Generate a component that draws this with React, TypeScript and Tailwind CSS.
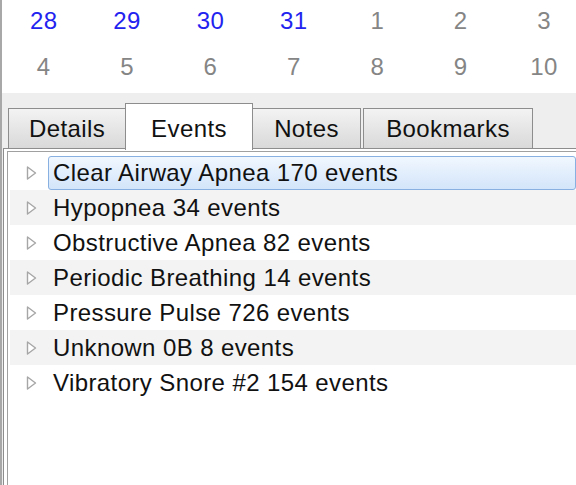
import React from "react";

const row1 = [
  { n: "28", blue: true },
  { n: "29", blue: true },
  { n: "30", blue: true },
  { n: "31", blue: true },
  { n: "1", blue: false },
  { n: "2", blue: false },
  { n: "3", blue: false },
];
const row2 = ["4", "5", "6", "7", "8", "9", "10"];

const events = [
  "Clear Airway Apnea 170 events",
  "Hypopnea 34 events",
  "Obstructive Apnea 82 events",
  "Periodic Breathing 14 events",
  "Pressure Pulse 726 events",
  "Unknown 0B 8 events",
  "Vibratory Snore #2 154 events",
];

function Tri() {
  return (
    <svg width="14" height="16" viewBox="0 0 14 16" className="shrink-0">
      <path d="M2.5 2 L10.5 8 L2.5 14 Z" fill="#ffffff" stroke="#a6a6a6" strokeWidth="1.4" strokeLinejoin="round" />
    </svg>
  );
}

export default function App() {
  return (
    <div
      className="w-[576px] h-[485px] bg-white overflow-hidden flex flex-col border-l-[2px] border-[#a8a8a8] text-[24px] tracking-[0.4px]"
      style={{ fontFamily: '"Liberation Sans", Arial, sans-serif' }}
    >
      {/* calendar */}
      <div className="h-[93px] shrink-0 flex flex-col">
        <div className="grid grid-cols-[repeat(7,83.4px)] h-[42px] items-center">
          {row1.map((d, i) => (
            <div key={i} className={`text-center leading-none ${d.blue ? "text-[#2323f0]" : "text-[#858585]"}`}>
              {d.n}
            </div>
          ))}
        </div>
        <div className="grid grid-cols-[repeat(7,83.4px)] h-[52px] items-center">
          {row2.map((d, i) => (
            <div key={i} className="text-center leading-none text-[#858585]">
              {d}
            </div>
          ))}
        </div>
      </div>

      {/* tab control */}
      <div className="flex-1 flex flex-col bg-[#eeeeee] pt-[10px]">
        <div className="h-[45px] shrink-0 flex items-end pl-[6px] relative z-10">
          <div className="w-[118px] h-[40px] border border-b-0 border-[#8d8d8d] bg-gradient-to-b from-[#f3f3f3] to-[#d9d9d9] flex items-center justify-center text-[#111]">
            Details
          </div>
          <div className="w-[128px] h-[47px] -ml-[1px] mb-[-2px] border border-b-0 border-[#8d8d8d] bg-white flex items-start pt-[7px] justify-center text-[#111]">
            Events
          </div>
          <div className="w-[109px] h-[40px] -ml-[1px] border border-b-0 border-[#8d8d8d] bg-gradient-to-b from-[#f3f3f3] to-[#d9d9d9] flex items-center justify-center text-[#111]">
            Notes
          </div>
          <div className="w-[170px] h-[40px] ml-[2px] border border-b-0 border-[#8d8d8d] bg-gradient-to-b from-[#f3f3f3] to-[#d9d9d9] flex items-center justify-center text-[#111]">
            Bookmarks
          </div>
        </div>
        <div className="flex-1 ml-[1px] border-l border-t border-[#8d8d8d] bg-white pt-[2px] pl-[3px]">
          <div className="h-full border-l border-t border-[#a0a0a0] pt-[3px] pl-[2px]">
            {events.map((e, i) => (
              <div
                key={i}
                className={`h-[35px] flex items-center ${i % 2 === 1 ? "bg-[#f3f3f3]" : "bg-white"}`}
              >
                <div className="w-[37px] flex justify-start pl-[15px] shrink-0">
                  <Tri />
                </div>
                {i === 0 ? (
                  <div className="flex-1 h-[34px] ml-[1px] rounded-[3px] border border-[#88b0e0] bg-gradient-to-b from-[#f1f7fe] to-[#d3e5fa] flex items-center pl-[4px] text-[#111] whitespace-nowrap">
                    {e}
                  </div>
                ) : (
                  <div className="pl-[6px] text-[#111] whitespace-nowrap">{e}</div>
                )}
              </div>
            ))}
          </div>
        </div>
      </div>
    </div>
  );
}
